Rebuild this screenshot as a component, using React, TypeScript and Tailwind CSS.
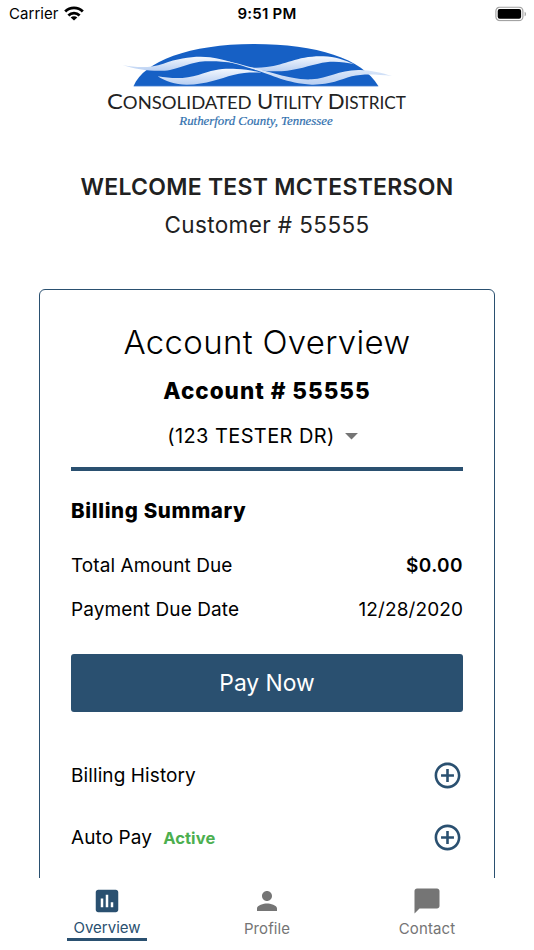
import React, { useState } from 'react';
import { MdAddCircleOutline, MdArrowDropDown, MdAssessment, MdChatBubble, MdPerson } from 'react-icons/md';
import { clsx } from 'clsx';

const StatusBar: React.FC = () => (
  <div className="grid h-7 shrink-0 grid-cols-3 items-center pl-[9px] pr-[7px] text-black">
    <div className="flex items-center gap-[6px]">
      <span className="text-[15px] tracking-[0.05px]">Carrier</span>
      <svg viewBox="0 0 20 15" className="h-[15px] w-5 -translate-x-px -translate-y-px" fill="none" stroke="currentColor" strokeWidth="2.8">
        <path d="M1.2 5.6a12.4 12.4 0 0 1 17.6 0" />
        <path d="M4.4 9.4a8 8 0 0 1 11.2 0" />
        <path d="M10 14.6 6.7 11.6a4.6 4.6 0 0 1 6.6 0z" fill="currentColor" stroke="none" />
      </svg>
    </div>
    <span className="-ml-[2px] text-center text-[15px] font-semibold tracking-[0.25px]">9:51 PM</span>
    <svg viewBox="0 0 32 15" className="h-[15px] w-8 -translate-y-[0.5px] justify-self-end">
      <rect x="0.9" y="0.6" width="27" height="13.6" rx="4" fill="none" stroke="#a3a3a3" strokeWidth="1.2" />
      <rect x="2.7" y="2.5" width="23.4" height="9.8" rx="2" fill="#000" />
      <path d="M29.6 5.2c1.8.7 1.8 3.9 0 4.6z" fill="#a3a3a3" />
    </svg>
  </div>
);

const Logo: React.FC = () => (
  <svg viewBox="0 0 1020 315" className="mt-[7px] h-[105px] w-[340px]">
    <defs>
      <linearGradient id="wave" x1="0" y1="0" x2="0" y2="1">
        <stop offset="0" stopColor="#f4f8fe" />
        <stop offset="1" stopColor="#b8cff2" />
      </linearGradient>
    </defs>
    <path d="M131 153C160 80 300 27 490 27S815 70 865 153z" fill="#1660c5" />
    <path d="M131 154H865" stroke="#8fb3e4" strokeWidth="2.5" />
    <g fill="url(#wave)">
      <path d="M98 90C150 100 185 97 220 86C270 68 320 62 360 67C385 70 405 76 432 84C400 79 370 78 345 79C300 82 280 97 240 105C200 112 140 104 98 90z" />
      <path d="M470 95C495 100 510 98 530 96C590 90 620 62 700 64C735 65 765 76 792 88C760 80 720 77 685 86C640 96 610 109 555 109C520 109 495 104 470 95z" />
      <path d="M203 124C250 132 290 131 325 120C370 104 400 99 440 102C465 103 490 107 515 113C480 112 460 113 430 120C390 130 350 149 290 149C255 149 225 138 203 124z" />
      <path d="M395 75C460 88 540 114 600 127C630 133 650 134 665 133C715 130 745 106 805 105C840 104 875 114 906 123C860 118 820 116 785 124C750 134 720 150 665 149C590 145 545 120 500 106C460 93 430 84 395 75z" />
    </g>
    <g fontFamily="Lato, sans-serif" fontSize="49" fill="#222">
      <text x="51" y="223" textLength="434" lengthAdjust="spacingAndGlyphs"><tspan fontSize="63">C</tspan>ONSOLIDATED</text>
      <text x="501" y="223" textLength="197" lengthAdjust="spacingAndGlyphs"><tspan fontSize="63">U</tspan>TILITY</text>
      <text x="713" y="223" textLength="235" lengthAdjust="spacingAndGlyphs"><tspan fontSize="63">D</tspan>ISTRICT</text>
    </g>
    <text x="268" y="270" fontFamily="'Liberation Serif', serif" fontStyle="italic" fontSize="37" fill="#2f6fae" stroke="#2f6fae" strokeWidth="0.6" textLength="460" lengthAdjust="spacingAndGlyphs">
      Rutherford County, Tennessee
    </text>
  </svg>
);

const sections = [
  { title: 'Billing History', status: '' },
  { title: 'Auto Pay', status: 'Active' },
];

const AccountCard: React.FC = () => (
  <div className="mx-[39px] mt-[48px] h-[640px] shrink-0 rounded-[6px] border-[1.5px] border-[#2a5070] px-[31px] text-black">
    <div className="flex h-[181px] flex-col items-center border-b-4 border-[#2a5070] pt-[31px]">
      <h2 className="text-[33px] font-light leading-[42px] tracking-[0.3px]">Account Overview</h2>
      <p className="mt-[13px] text-[22.5px] font-extrabold leading-[30px] tracking-[1px]">Account # 55555</p>
      <button className="mt-[14px] flex items-center text-[20px] leading-[28px] tracking-[0.4px]">
        (123 TESTER DR)
        <MdArrowDropDown className="ml-px h-[31px] w-[31px] text-[#757575]" />
      </button>
    </div>

    <h3 className="mt-[25px] text-[20.5px] font-extrabold leading-[30px] tracking-[0.65px]">Billing Summary</h3>
    <div className="mt-[25px] flex justify-between text-[19px] leading-[30px] tracking-[0.07px]">
      <span>Total Amount Due</span>
      <span className="font-semibold tracking-[0.4px]">$0.00</span>
    </div>
    <div className="mt-[14px] flex justify-between text-[19px] leading-[30px] tracking-[0.1px]">
      <span>Payment Due Date</span>
      <span>12/28/2020</span>
    </div>

    <button className="mt-[29px] block h-[58px] w-full rounded-[3px] bg-[#2a5070] pt-px text-[22.8px] text-white">
      Pay Now
    </button>

    <div className="mt-[33px]">
      {sections.map(section => (
        <div key={section.title} className="flex h-[62px] items-center text-[19px] tracking-[0.1px]">
          <span>{section.title}</span>
          {section.status && (
            <span className="ml-[11px] text-[16.5px] font-bold tracking-[0.1px] text-[#4caf50]">{section.status}</span>
          )}
          <MdAddCircleOutline className="-mt-px ml-auto h-[31px] w-[31px] text-[#2a5070]" />
        </div>
      ))}
    </div>
  </div>
);

const tabs = [
  { label: 'Overview', icon: MdAssessment },
  { label: 'Profile', icon: MdPerson },
  { label: 'Contact', icon: MdChatBubble },
];

export default function App() {
  const [activeTab, setActiveTab] = useState('Overview');

  return (
    <div className="flex h-[950px] w-[534px] flex-col overflow-hidden bg-white font-['Inter',sans-serif]">
      <StatusBar />

      {/* Page content */}
      <div className="flex min-h-0 flex-1 flex-col overflow-hidden">
        <div className="flex flex-col items-center pr-[14px]">
          <Logo />
        </div>
        <div className="mt-[31px] text-center text-[#212121]">
          <h1 className="text-[23px] font-semibold leading-[32px] tracking-[0.25px]">WELCOME TEST MCTESTERSON</h1>
          <p className="mt-[6px] text-[22.5px] leading-[32px] tracking-[0.4px]">Customer # 55555</p>
        </div>
        <AccountCard />
      </div>

      {/* Bottom navigation */}
      <nav className="flex h-[72px] shrink-0 justify-center gap-[80px] bg-white">
        {tabs.map(({ label, icon: Icon }) => {
          const active = label === activeTab;
          return (
            <button
              key={label}
              onClick={() => setActiveTab(label)}
              className={clsx(
                'flex h-[63px] w-[80px] flex-col items-center border-b-[3px] pt-[8px] text-[15px] leading-5',
                active ? 'border-[#2a5070] text-[#2a5070]' : 'border-transparent tracking-[0.1px] text-[#757575]'
              )}
            >
              <Icon className="h-[30px] w-[30px] shrink-0" />
              <span className={active ? 'mt-[2px]' : 'mt-[3px]'}>{label}</span>
            </button>
          );
        })}
      </nav>
    </div>
  );
}
